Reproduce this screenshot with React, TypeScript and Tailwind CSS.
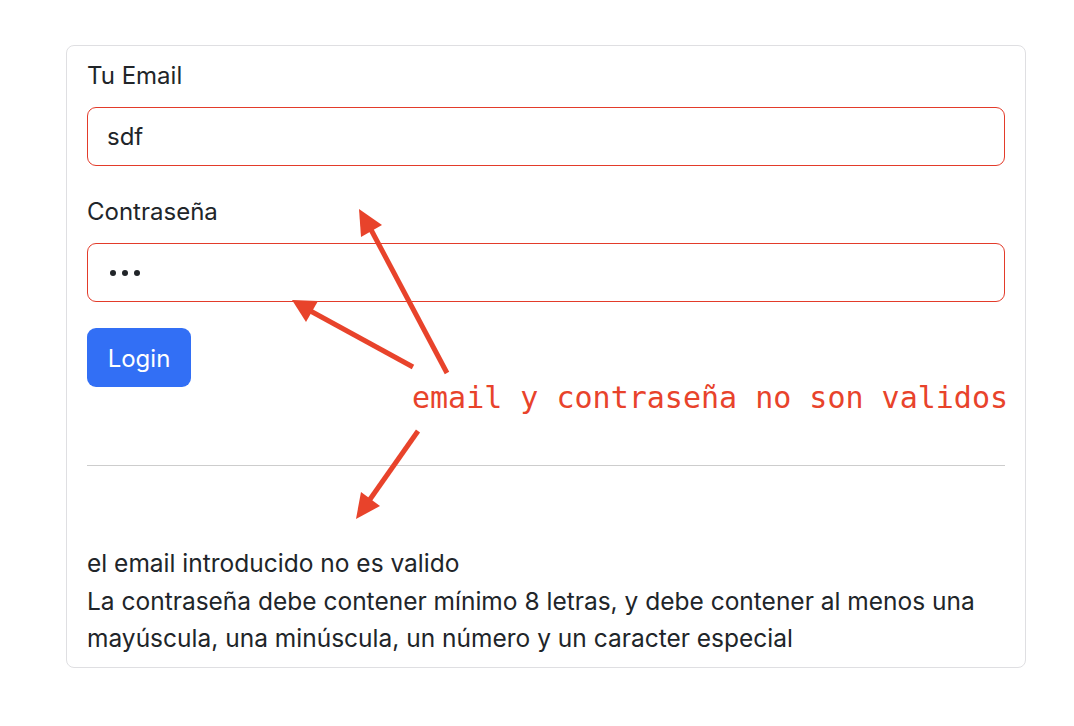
import React from "react";

export default function App() {
  const red = "#e8432b";
  return (
    <div
      className="relative min-h-screen w-[1074px] bg-white text-[#212529]"
      style={{ fontFamily: 'Inter, "Noto Sans", "Liberation Sans", sans-serif' }}
    >
      <div className="pl-[66px] pt-[45px]">
        <div className="w-[960px] rounded-[8px] border border-[#dfdfe2] px-[20px] pb-[9px] pt-[12px]">
          <label className="block text-[24px] leading-[36px]">Tu Email</label>
          <div className="mt-[13px] flex h-[59px] items-center rounded-[9px] border border-[#e33b2a] px-[19px] text-[24px]">
            sdf
          </div>
          <label className="mt-[28px] block text-[24px] leading-[36px]">Contraseña</label>
          <div className="mt-[13px] flex h-[59px] items-center gap-[6px] rounded-[9px] border border-[#e33b2a] pl-[22px]">
            <span className="h-[6px] w-[6px] rounded-full bg-[#212529]" />
            <span className="h-[6px] w-[6px] rounded-full bg-[#212529]" />
            <span className="h-[6px] w-[6px] rounded-full bg-[#212529]" />
          </div>
          <button className="mt-[26px] flex h-[59px] w-[104px] items-center justify-center rounded-[9px] bg-[#326ff5] pt-[2px] text-[24px] text-white">
            Login
          </button>
          <hr className="mt-[78px] border-0 border-t border-[#cdcdcd]" />
          <div className="mt-[79px] text-[24.5px] leading-[37.5px]">
            <p>el email introducido no es valido</p>
            <p>
              La contraseña debe contener mínimo 8 letras, y debe contener al menos una mayúscula, una
              minúscula, un número y un caracter especial
            </p>
          </div>
        </div>
      </div>

      <svg className="pointer-events-none absolute left-0 top-0" width="1074" height="726">
        <line x1="447" y1="373" x2="368" y2="224" stroke={red} strokeWidth="5" />
        <polygon points="359,209 382,225 361,237" fill={red} />
        <line x1="413" y1="367" x2="305" y2="308" stroke={red} strokeWidth="5" />
        <polygon points="292,300 318,301 306,322" fill={red} />
        <line x1="418" y1="431" x2="366" y2="505" stroke={red} strokeWidth="5" />
        <polygon points="356,519 361,492 380,506" fill={red} />
      </svg>
      <div
        className="absolute left-[412px] top-[378px] whitespace-pre text-[30px] leading-[40px] text-[#e8432b]"
        style={{ fontFamily: '"DejaVu Sans Mono", monospace' }}
      >
        email y contraseña no son validos
      </div>
    </div>
  );
}
